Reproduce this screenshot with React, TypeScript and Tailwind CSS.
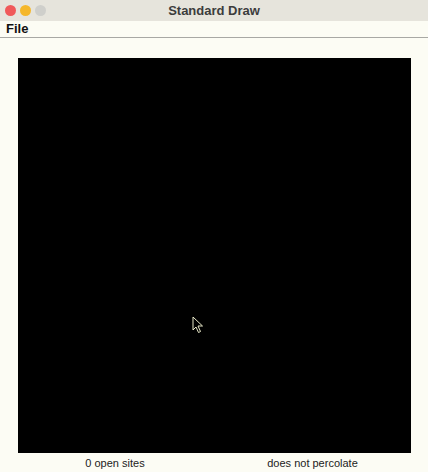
export default function App() {
  return (
    <div className="w-[428px] h-[472px] overflow-hidden bg-[#fcfcf4] font-['Liberation_Sans',Arial,sans-serif] flex flex-col">
      {/* title bar */}
      <div className="h-[21px] bg-[#e6e4dc] flex items-center relative">
        <div className="flex gap-[4px] pl-[5px]">
          <div className="w-[11px] h-[11px] rounded-full bg-[#f0595a]" />
          <div className="w-[11px] h-[11px] rounded-full bg-[#f5b72a]" />
          <div className="w-[11px] h-[11px] rounded-full bg-[#cfcfcb]" />
        </div>
        <div className="absolute inset-0 flex items-center justify-center text-[13px] font-bold text-[#3c3c3c]">
          Standard Draw
        </div>
      </div>
      {/* menu bar */}
      <div className="h-[17px] border-b border-[#a8a8a4] flex items-center pl-[6px] text-[13px] font-semibold text-[#111]">
        File
      </div>
      {/* canvas */}
      <div className="pl-[18px] pt-[20px]">
        <div className="w-[393px] h-[395px] bg-black relative">
          <svg className="absolute left-[174px] top-[258px]" width="12" height="18" viewBox="0 0 12 18">
            <path d="M1 1 L1 14 L4 11 L6.5 16.5 L8.5 15.5 L6 10 L10.5 10 Z" fill="#000" stroke="#e8e8c8" strokeWidth="1" />
          </svg>
        </div>
      </div>
      {/* status */}
      <div className="flex text-[11px] text-[#222] mt-[2px]">
        <div className="w-[230px] text-center">0 open sites</div>
        <div className="w-[165px] text-center">does not percolate</div>
      </div>
    </div>
  )
}
